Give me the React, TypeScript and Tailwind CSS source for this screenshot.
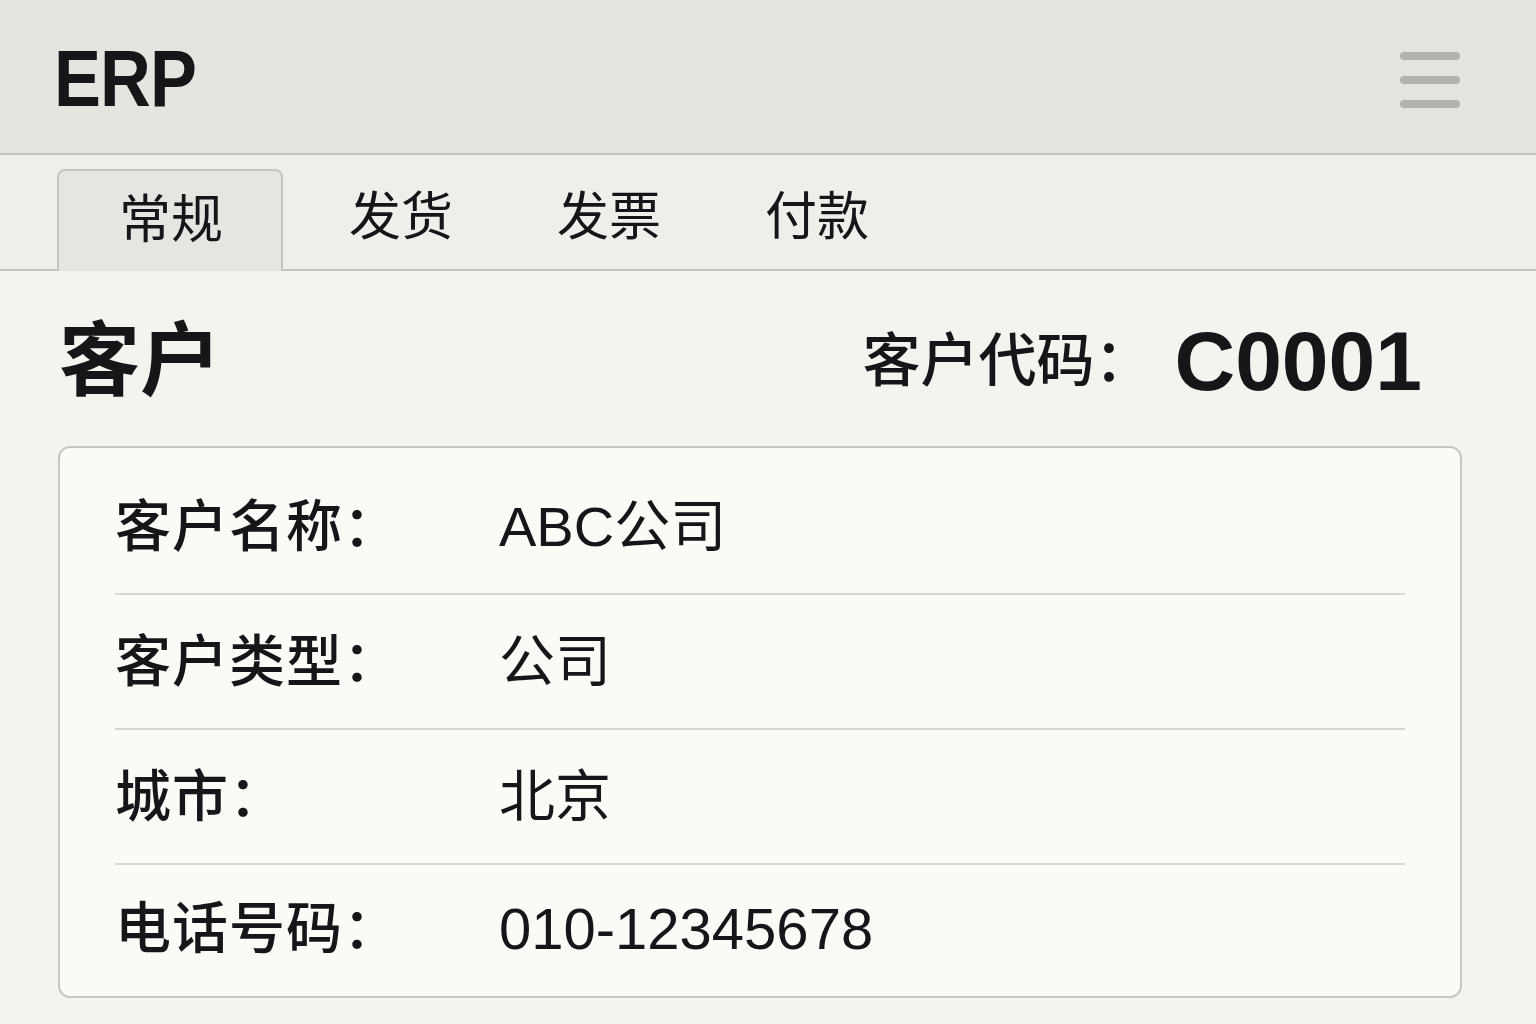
import React from "react";

const rows = [
  { label: "客户名称：", value: "ABC公司" },
  { label: "客户类型：", value: "公司" },
  { label: "城市：", value: "北京" },
  { label: "电话号码：", value: "010-12345678" },
];

export default function App() {
  return (
    <div
      className="w-[1536px] h-[1024px] overflow-hidden bg-[#f4f3ef] text-[#161616]"
      style={{ fontFamily: '"Liberation Sans", "Noto Sans CJK SC", sans-serif' }}
    >
      <header className="h-[155px] bg-[#e6e4e0] border-b-2 border-[#c4c2bf] flex items-center justify-between pl-[54px] pr-[76px]">
        <div className="text-[80px] font-bold tracking-[-1px] leading-none mt-[4px] origin-left scale-x-[0.88]">ERP</div>
        <div className="flex flex-col gap-[16px] mt-[6px]">
          <span className="block w-[60px] h-[8px] rounded-full bg-[#b3b1ae]" />
          <span className="block w-[60px] h-[8px] rounded-full bg-[#b3b1ae]" />
          <span className="block w-[60px] h-[8px] rounded-full bg-[#b3b1ae]" />
        </div>
      </header>

      <nav className="h-[116px] bg-[#f0eeea] border-b-2 border-[#c4c2bf] flex items-end pl-[57px]">
        <div className="w-[226px] h-[102px] mb-[-2px] rounded-t-[8px] border-2 border-b-0 border-[#c6c4c1] bg-[#e7e5e1] flex items-center justify-center text-[52px] leading-none pb-[2px] pl-[2px]">
          常规
        </div>
        <div className="ml-[14px] w-[208px] h-[102px] flex items-center justify-center text-[52px] leading-none pb-[2px]">发货</div>
        <div className="w-[208px] h-[102px] flex items-center justify-center text-[52px] leading-none pb-[2px]">发票</div>
        <div className="w-[208px] h-[102px] flex items-center justify-center text-[52px] leading-none pb-[2px]">付款</div>
      </nav>

      <main className="pl-[58px] pr-[75px]">
        <div className="h-[175px] flex items-center justify-between pr-[39px]">
          <h1 className="text-[81px] font-bold leading-none ml-[1px] mt-[6px]">客户</h1>
          <div className="flex items-center mt-[4px]">
            <span className="text-[58px] font-medium leading-none">客户代码：</span>
            <span className="text-[84px] font-bold leading-none ml-[22px]">C0001</span>
          </div>
        </div>

        <section className="w-[1404px] h-[552px] rounded-[12px] border-2 border-[#c9c7c3] bg-[#fbfaf7] px-[55px] pt-[12px]">
          {rows.map((r, i) => (
            <div
              key={r.label}
              className={
                i < rows.length - 1
                  ? "h-[135px] flex items-center border-b-2 border-[#d8d6d2]"
                  : "h-[128px] flex items-center"
              }
            >
              <div className="w-[384px] text-[56px] font-medium leading-none tracking-[1px]">{r.label}</div>
              <div className={i === 3 ? "text-[58px] leading-none" : "text-[56px] leading-none"}>{r.value}</div>
            </div>
          ))}
        </section>
      </main>
    </div>
  );
}
